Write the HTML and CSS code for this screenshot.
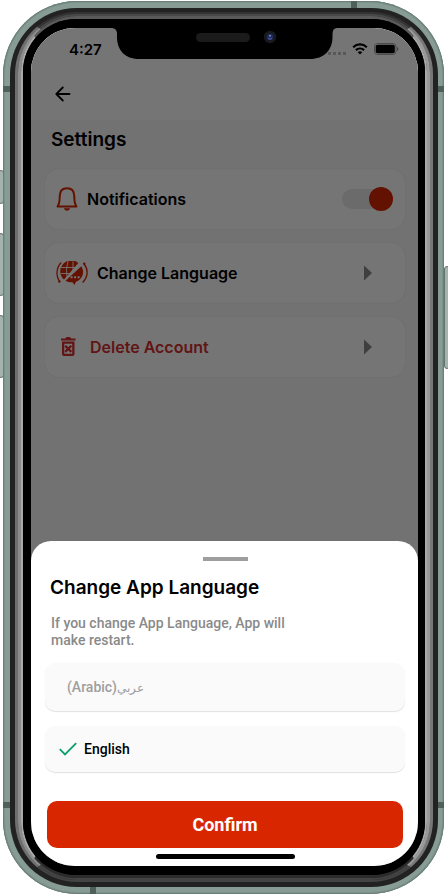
FILE: index.html
```html
<!DOCTYPE html>
<html lang="en">
<head>
<meta charset="utf-8">
<meta name="viewport" content="width=device-width, initial-scale=1">
<title>Settings</title>
<link rel="stylesheet" href="styles.css">
</head>
<body>
<div class="phone">
  <span class="key key-mute"></span>
  <span class="key key-up"></span>
  <span class="key key-down"></span>
  <span class="key key-power"></span>
  <div class="frame">
    <span class="seam seam-top"></span>
    <span class="seam seam-bottom"></span>
    <span class="seam seam-side seam-upper"></span>
    <span class="seam seam-side seam-lower"></span>
    <div class="band">
      <div class="steel steel-outer"><div class="steel steel-mid"><div class="steel steel-inner">
        <div class="bezel">
          <div class="screen">
            <main class="app">
              <header class="app-header">
                <div class="status">
                  <span class="time">4:27</span>
                  <span class="status-icons">
                    <svg width="18" height="12" viewBox="0 0 18 12" class="signal"><path d="M0 9h3v3H0zM5 9h3v3H5zM10 9h3v3h-3zM15 9h3v3h-3z"/></svg>
                    <svg width="16" height="12" viewBox="0 0 16 12"><g fill="none" stroke="#000" stroke-width="2.2"><path d="M1.2 4.2a9.8 9.8 0 0 1 13.6 0"/><path d="M3.9 7.1a6 6 0 0 1 8.2 0"/></g><path d="M8 11.6 5.7 9.3a3.3 3.3 0 0 1 4.6 0z"/></svg>
                    <svg width="25" height="12" viewBox="0 0 25 12"><rect x=".5" y=".5" width="21.500" height="11" rx="3" fill="none" stroke="#000" stroke-opacity=".35"/><rect x="1.700" y="1.700" width="19.100" height="8.600" rx="1.800"/><path d="M23.200 4v4c1.600-.6 1.600-3.400 0-4z" opacity=".5"/></svg>
                  </span>
                </div>
                <button class="back" type="button" aria-label="Back">
                  <svg width="16" height="16" viewBox="0 0 16 16" fill="none" stroke="#000" stroke-width="1.800" stroke-linecap="round" stroke-linejoin="round"><path d="M14.500 8H1.500M7.800 1.500 1.300 8l6.500 6.500"/></svg>
                </button>
              </header>
              <h1 class="title">Settings</h1>
              <div class="cards">
                <div class="card">
                  <svg width="22" height="24" viewBox="0 0 22 24"><path d="M1.500 19.500H20.500C18.600 17 18.300 14.500 18.300 9.500C18.300 4 15.500 1.200 11 1.200S3.700 4 3.700 9.500C3.700 14.500 3.400 17 1.500 19.500Z" fill="none" stroke="#d82600" stroke-width="2" stroke-linejoin="round"/><path d="M7.800 21.300h6.400c-.6 1.700-1.700 2.400-3.200 2.400s-2.600-.7-3.200-2.400z" fill="#d82600"/></svg>
                  <label class="card-label" for="notify">Notifications</label>
                  <input class="switch" id="notify" type="checkbox" role="switch" checked>
                </div>
                <button class="card" type="button">
                  <svg width="32" height="24" viewBox="0 0 32 24"><g fill="none" stroke="#d82600"><path d="M5.200 1.500C-.2 7 0 15.500 3.500 20.500M28 3C32.300 8 32.500 15.500 26.600 21.500" stroke-width="1.300"/></g><circle cx="3.400" cy="20.500" r="1.200" fill="#d82600"/><circle cx="28.200" cy="2.700" r="1.300" fill="#d82600"/><path d="M22.300 2A10.300 10.300 0 0 0 8.100 18.600Z" fill="#d82600"/><path d="M12 0Q9.500 8 11 17M17 .5V12M5 6.500H20M5 12.500H17" fill="none" stroke="#fff" stroke-width=".9"/><path d="M25.300 5.200A10.300 10.300 0 0 1 20 20.800L18.400 24 16.500 21.300Q12.500 21.600 9.500 19.700Z" fill="#d82600"/><path d="M14.600 15.200h2v2h-2zM18.100 15.200h2v2h-2zM21.600 15.200h2v2h-2z" fill="#fff"/></svg>
                  <span class="card-label">Change Language</span>
                  <svg class="caret" width="8" height="16" viewBox="0 0 8 16"><path d="M0 .5 8 8 0 15.500z"/></svg>
                </button>
                <button class="card card-danger" type="button">
                  <svg width="24" height="20" viewBox="0 0 24 20" fill="#d32f2f"><path d="M5 1.500h4.300L10.500 0h3.500l1.200 1.500h4.300v2H5z"/><path fill-rule="evenodd" d="M6 4.500h12.500V17a2 2 0 0 1-2 2H8a2 2 0 0 1-2-2zM8.300 6.800V16.700h7.900V6.800z"/><path d="M9.200 8.700 15.300 14.900M15.300 8.700 9.200 14.900" stroke="#d32f2f" stroke-width="2.300"/></svg>
                  <span class="card-label">Delete Account</span>
                  <svg class="caret" width="8" height="16" viewBox="0 0 8 16"><path d="M0 .5 8 8 0 15.500z"/></svg>
                </button>
              </div>
            </main>
            <div class="scrim"></div>
            <form class="sheet" role="dialog" aria-labelledby="sheet-title">
              <span class="grip"></span>
              <h2 class="sheet-title" id="sheet-title">Change App Language</h2>
              <p class="note">If you change App Language, App will make restart.</p>
              <label class="option">
                <input type="radio" name="lang">
                <span>(Arabic)<span class="arabic" lang="ar">عربي</span></span>
              </label>
              <label class="option option-selected">
                <input type="radio" name="lang" checked>
                <svg width="18" height="14" viewBox="0 0 18 14" fill="none" stroke="#08a06a" stroke-width="1.800"><path d="M.8 7.200 6 12.400 17.200 1.200"/></svg>
                <span>English</span>
              </label>
              <button class="confirm" type="button">Confirm</button>
              <span class="home-bar"></span>
            </form>
            <svg class="notch" width="226" height="31" viewBox="0 0 226 31"><path d="M0 0C4 0 6 2 6 6V9C6 22 14 31 28 31H199C213 31 221.500 22 221.500 9V6C221.500 2 223 0 226 0Z"/><rect x="85" y="5" width="54" height="9" rx="4.500" fill="#1b1b1b"/><circle cx="159" cy="9" r="6.200" fill="#171a1c"/><circle cx="159" cy="9" r="3.200" fill="#202b60"/><circle cx="159" cy="7.800" r="1" fill="#6f8dbb"/><path d="M157 10.500q2 1.500 4 0" stroke="#5260b0" fill="none"/></svg>
          </div>
        </div>
      </div></div></div>
    </div>
  </div>
</div>
</body>
</html>
```

FILE: styles.css
```css
* { box-sizing: border-box; }

body {
  margin: 0;
  background: #fff;
  font-family: Inter, "Liberation Sans", sans-serif;
  color: #000;
}

button { font: inherit; color: inherit; border: 0; background: none; cursor: pointer; }
svg { flex: none; display: block; }

/* Phone body: every layer stretches the one inside it */
.phone {
  position: relative;
  display: flex;
  min-height: 100vh;
  padding: 1px 4px 0 3px;
  overflow: hidden;
}

.frame, .band, .steel, .bezel, .screen {
  flex: 1;
  display: flex;
  min-width: 0;
}

.frame {
  position: relative;
  padding: 7px 6px 7px 7px;
  border-radius: 74px;
  background: #879c94;
  box-shadow: inset 0 0 0 1px #6b8078, inset 0 0 0 2px #7d928a;
}

.band {
  position: relative;
  padding: 4px 5px 5px;
  border-radius: 67px;
  background: #222;
}

.steel { border-style: solid; }
.steel-outer {
  border-width: 2px 3px;
  border-color: #333 #777 #444 #6e6e6e;
  border-radius: 62px;
}
.steel-mid {
  border-width: 2px 3px;
  border-color: #484848 #999 #444 #8c8c8c;
  border-radius: 59px;
}
.steel-inner {
  border-width: 3px 2px;
  border-color: #5a5a5a #a8a8a8 #2c2c2c #aaa;
  border-radius: 56px;
  background: #000;
}

.bezel {
  padding: 9px 7px 9px 8px;
  border-radius: 53px;
  background: #000;
}

.screen {
  position: relative;
  overflow: hidden;
  border-radius: 44px;
  background: #f8f8f8;
}

.key {
  position: absolute;
  left: -2px;
  width: 6px;
  border: 1px solid #65736e;
  border-radius: 3px;
  background: #a5b3ae;
}
.key-mute { top: 170px; height: 34px; }
.key-up { top: 233px; height: 63px; }
.key-down { top: 315px; height: 63px; }
.key-power { top: 266px; left: auto; right: -2px; height: 103px; }

.seam { position: absolute; background: #4f5f59; }
.seam-top { top: 0; right: 87px; width: 6px; height: 7px; }
.seam-bottom { bottom: 0; left: 87px; width: 6px; height: 7px; }
.seam-side { left: 0; right: 0; height: 6px; }
.seam-upper { top: 85px; }
.seam-lower { bottom: 86px; }

/* Settings page */
.app { flex: 1; min-width: 0; }

.app-header {
  display: flex;
  flex-direction: column;
  height: 92px;
  background: #fff;
}

.status {
  display: flex;
  align-items: center;
  justify-content: space-between;
  height: 42px;
  padding: 0 19px 0 38px;
}
.time { font-size: 15px; font-weight: 600; }
.status-icons { display: flex; align-items: center; gap: 6px; }
.signal { opacity: .25; }

.back {
  align-self: flex-start;
  margin-left: 16px;
  padding: 16px 8px;
}

.title {
  margin: 0;
  padding: 8px 20px 17px;
  font-size: 19px;
  line-height: 24px;
  font-weight: 600;
}

.cards {
  display: flex;
  flex-direction: column;
  gap: 14px;
  padding: 0 13px 0 14px;
}

.card {
  display: flex;
  align-items: center;
  gap: 9px;
  height: 60px;
  padding: 0 12px 0 11px;
  border-radius: 14px;
  background: #fff;
  box-shadow: 0 0 1px rgba(0, 0, 0, .16);
  font-size: 16px;
  font-weight: 600;
  text-align: left;
}
.card-label { flex: 1; }
.card-danger { gap: 10px; color: #d32f2f; }
.caret { margin-right: 21px; fill: #8a8a8a; }

.switch {
  appearance: none;
  display: flex;
  align-items: center;
  justify-content: flex-end;
  width: 51px;
  height: 20px;
  margin: 0;
  border-radius: 10px;
  background: #eaeaea;
}
.switch::before {
  content: "";
  width: 24px;
  height: 24px;
  flex: none;
  border-radius: 50%;
  background: #d82600;
}

.scrim {
  position: absolute;
  inset: 0;
  background: rgba(0, 0, 0, .54);
}

/* Language sheet */
.sheet {
  position: absolute;
  inset: auto 0 0;
  display: flex;
  flex-direction: column;
  padding: 16px 13px 7px 14px;
  border-radius: 20px 20px 0 0;
  background: #fff;
  font-family: Roboto, "Liberation Sans", sans-serif;
  font-size: 14px;
  font-weight: 500;
}

.grip {
  align-self: center;
  width: 45px;
  height: 4px;
  background: #9e9e9e;
}

.sheet-title {
  margin: 15px 5px 15px;
  font-family: Inter, "Liberation Sans", sans-serif;
  font-size: 19px;
  line-height: 24px;
  font-weight: 600;
}

.note {
  max-width: 250px;
  margin: 0 6px 14px;
  line-height: 17px;
  color: #8a8a8a;
}

.option {
  display: flex;
  align-items: center;
  gap: 7px;
  height: 48px;
  margin-bottom: 15px;
  padding: 0 22px;
  border-radius: 10px;
  background: #fafafa;
  box-shadow: 0 1px 1px rgba(0, 0, 0, .12);
  color: #9e9e9e;
}
.option input {
  position: absolute;
  appearance: none;
  margin: 0;
}
.option-selected {
  height: 46px;
  margin-bottom: 29px;
  padding: 0 14px;
  color: #000;
}
.arabic { font-size: 12px; }

.confirm {
  height: 47px;
  margin: 0 2px 6px;
  border-radius: 10px;
  background: #d82600;
  color: #fff;
  font-size: 18px;
  font-weight: 700;
}

.home-bar {
  align-self: center;
  width: 139px;
  height: 5px;
  border-radius: 3px;
  background: #000;
}

.notch {
  position: absolute;
  top: 0;
  left: 50%;
  margin-left: -114px;
}
```
